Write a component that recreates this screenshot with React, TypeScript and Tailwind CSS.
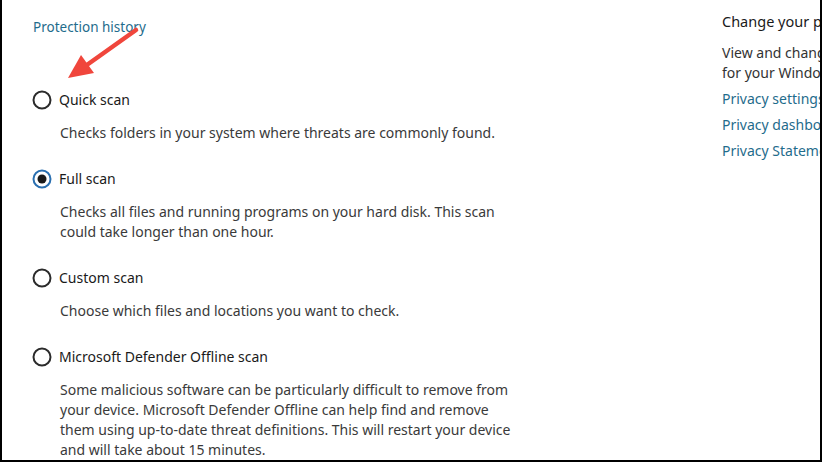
import React from "react";

const font = { fontFamily: '"Noto Sans", "Open Sans", sans-serif' };

function Radio({ checked }: { checked?: boolean }) {
  return (
    <svg width="20" height="20" viewBox="0 0 20 20" className="shrink-0">
      {checked ? (
        <>
          <circle cx="10" cy="10" r="8.5" fill="white" stroke="#2a6fb0" strokeWidth="2" />
          <circle cx="10" cy="10" r="4.5" fill="#1a1a1a" />
        </>
      ) : (
        <circle cx="10" cy="10" r="8.5" fill="white" stroke="#2b2b2b" strokeWidth="2" />
      )}
    </svg>
  );
}

function Option({ title, desc, checked }: { title: string; desc: React.ReactNode; checked?: boolean }) {
  return (
    <div className="flex flex-col">
      <div className="flex items-center gap-[7px] h-5 -ml-[1px]">
        <Radio checked={checked} />
        <span className="text-[14px] leading-5 text-[#1a1a1a]">{title}</span>
      </div>
      <div className="mt-[13px] pl-[27px] text-[14px] leading-5 text-[#3a3a3a] w-[490px]">{desc}</div>
    </div>
  );
}

export default function App() {
  return (
    <div
      className="relative w-[822px] h-[462px] bg-white border-l-2 border-r-2 border-b-2 border-black overflow-hidden flex"
      style={font}
    >
      <div className="flex flex-col pl-[31px] w-[688px] shrink-0">
        <div className="mt-[17px] text-[13.5px] leading-5 text-[#1f6c8c]">Protection history</div>
        <div className="mt-[53px] flex flex-col gap-[26px]">
          <Option title="Quick scan" desc="Checks folders in your system where threats are commonly found." />
          <Option
            checked
            title="Full scan"
            desc={
              <>
                Checks all files and running programs on your hard disk. This scan
                <br />
                could take longer than one hour.
              </>
            }
          />
          <Option title="Custom scan" desc="Choose which files and locations you want to check." />
          <Option
            title="Microsoft Defender Offline scan"
            desc={
              <>
                Some malicious software can be particularly difficult to remove from
                <br />
                your device. Microsoft Defender Offline can help find and remove
                <br />
                them using up-to-date threat definitions. This will restart your device
                <br />
                and will take about 15 minutes.
              </>
            }
          />
        </div>
      </div>
      <div className="flex flex-col pl-[32px] whitespace-nowrap">
        <div className="mt-[11px] text-[14.5px] leading-5 text-[#1a1a1a]">Change your privacy settings</div>
        <div className="mt-3 text-[14px] leading-5 text-[#333]">
          View and change privacy settings
          <br />
          for your Windows 10 device.
        </div>
        <div className="mt-[6px] flex flex-col gap-[6px] text-[14px] leading-5 text-[#1f6c8c]">
          <span>Privacy settings</span>
          <span>Privacy dashboard</span>
          <span>Privacy Statement</span>
        </div>
      </div>
      <svg className="absolute left-0 top-0 pointer-events-none" width="200" height="100">
        <line x1="134" y1="30" x2="82" y2="67" stroke="#f0463c" strokeWidth="4.5" strokeLinecap="round" />
        <polygon points="66,78 79,55 92,73" fill="#f0463c" />
      </svg>
    </div>
  );
}
